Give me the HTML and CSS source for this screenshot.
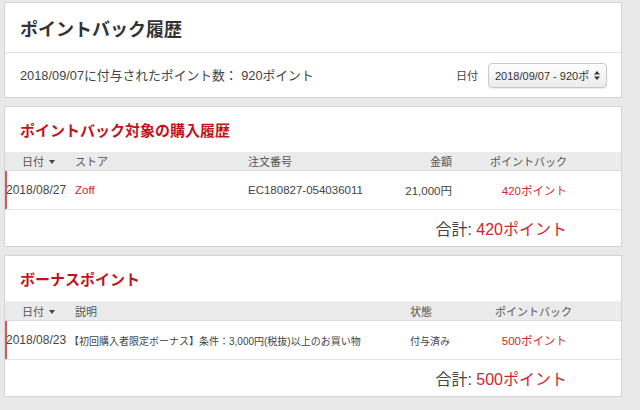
FILE: index.html
```html
<!DOCTYPE html>
<html lang="ja">
<head>
<meta charset="utf-8">
<title>ポイントバック履歴</title>
<link rel="stylesheet" href="styles.css">
</head>
<body>
<div class="page">
  <section class="panel">
    <div class="page-head"><h1 class="page-title">ポイントバック履歴</h1></div>
    <div class="summary">
      <p class="summary-text">2018/09/07に付与されたポイント数： 920ポイント</p>
      <div class="date-filter">
        <span class="filter-label">日付</span>
        <div class="select">
          <span class="select-text">2018/09/07 - 920ポ</span>
          <svg class="select-arrows" width="6" height="9" viewBox="0 0 6 9"><path d="M3 0 L6 3.5 H0 Z M3 9 L6 5.5 H0 Z" fill="#333"/></svg>
        </div>
      </div>
    </div>
  </section>

  <section class="panel">
    <h2 class="section-title">ポイントバック対象の購入履歴</h2>
    <div class="row-grid grid-a thead">
      <span class="th-date">日付<i class="caret"></i></span>
      <span>ストア</span>
      <span>注文番号</span>
      <span class="right">金額</span>
      <span class="right">ポイントバック</span>
    </div>
    <div class="row-grid grid-a tbody">
      <span class="td-date">2018/08/27</span>
      <span class="red">Zoff</span>
      <span>EC180827-054036011</span>
      <span class="right">21,000円</span>
      <span class="right red">420ポイント</span>
    </div>
    <div class="total">合計: <span class="total-val">420ポイント</span></div>
  </section>

  <section class="panel">
    <h2 class="section-title">ボーナスポイント</h2>
    <div class="row-grid grid-b thead thead-b">
      <span class="th-date">日付<i class="caret"></i></span>
      <span>説明</span>
      <span>状態</span>
      <span class="right">ポイントバック</span>
    </div>
    <div class="row-grid grid-b tbody">
      <span class="td-date">2018/08/23</span>
      <span class="small desc">【初回購入者限定ボーナス】条件：3,000円(税抜)以上のお買い物</span>
      <span class="small">付与済み</span>
      <span class="right red">500ポイント</span>
    </div>
    <div class="total">合計: <span class="total-val">500ポイント</span></div>
  </section>
</div>
</body>
</html>
```

FILE: styles.css
```css
* { box-sizing: border-box; }
html, body { margin: 0; padding: 0; }
body {
  background: #e9e9e9;
  font-family: "Liberation Sans", "Noto Sans CJK JP", sans-serif;
  color: #444;
  width: 640px;
  height: 410px;
  overflow: hidden;
}
.page {
  padding: 2px 18px 0 4px;
}
.panel {
  background: #fff;
  border: 1px solid #d4d4d4;
  margin-bottom: 8px;
}
.page-head {
  height: 50px;
  display: flex;
  align-items: center;
  padding-left: 15px;
  border-bottom: 1px solid #dedede;
}
.page-title {
  margin: 0;
  font-family: "Noto Sans CJK JP", sans-serif;
  font-size: 18px;
  font-weight: bold;
  color: #333;
  line-height: 1;
}
.summary {
  height: 44px;
  display: flex;
  align-items: center;
  justify-content: space-between;
  padding: 0 14px 0 15px;
}
.summary-text {
  margin: 0;
  font-size: 12.8px;
  color: #444;
  line-height: 1;
  padding-top: 2px;
}
.date-filter {
  display: flex;
  align-items: center;
  gap: 10px;
}
.filter-label {
  font-size: 11px;
  color: #444;
}
.select {
  width: 119px;
  height: 25px;
  border: 1px solid #c9c9c9;
  border-radius: 4px;
  background: linear-gradient(#fefefe, #ececec);
  box-shadow: 0 1px 1px rgba(0,0,0,0.08);
  display: flex;
  align-items: center;
  padding: 0 6px 0 6px;
  gap: 3px;
}
.select-text {
  flex: 1;
  overflow: hidden;
  white-space: nowrap;
  font-size: 11px;
  color: #333;
}
.select-arrows { flex: none; }
.section-title {
  margin: 0;
  height: 45px;
  display: flex;
  align-items: center;
  padding-left: 15px;
  font-family: "Noto Sans CJK JP", sans-serif;
  font-size: 15px;
  font-weight: bold;
  color: #c0141c;
}
.row-grid {
  display: grid;
  align-items: center;
  white-space: nowrap;
}
.grid-a { grid-template-columns: 70px 173px 150px 54px 115px 1fr; }
.grid-b { grid-template-columns: 70px 335px 85px 72px 1fr; }
.thead {
  height: 19px;
  background: #ebebeb;
  border-bottom: 1px solid #dcdcdc;
  font-size: 11px;
  color: #555;
}
.thead-b { height: 20px; }
.tbody {
  height: 39px;
  border-bottom: 1px solid #e4e4e4;
  box-shadow: inset 2px 0 0 #d45a60;
  font-size: 11.5px;
  color: #444;
}
.th-date {
  padding-left: 17px;
  display: flex;
  align-items: center;
}
.caret {
  display: inline-block;
  width: 0;
  height: 0;
  margin-left: 5px;
  margin-top: 2px;
  border-top: 4px solid #444;
  border-left: 3px solid transparent;
  border-right: 3px solid transparent;
}
.td-date {
  padding-left: 1px;
  font-size: 12px;
}
.right { text-align: right; }
.red { color: #d0262d; }
.small { font-size: 10px; }
.desc { margin-left: -6px; }
.total {
  height: 36px;
  display: flex;
  align-items: center;
  justify-content: flex-end;
  padding-right: 54px;
  font-size: 16px;
  color: #444;
  white-space: pre;
}
.total-val { color: #d0262d; }
```
